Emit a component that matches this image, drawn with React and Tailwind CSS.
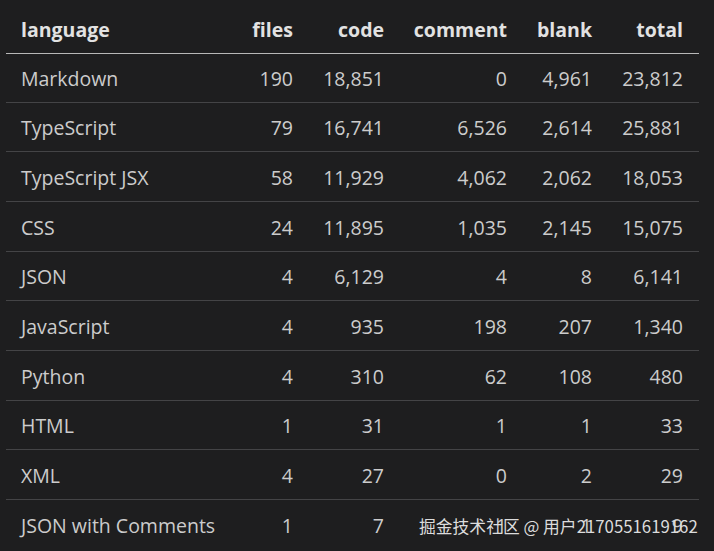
import React from "react";

const rows = [
  ["Markdown", "190", "18,851", "0", "4,961", "23,812"],
  ["TypeScript", "79", "16,741", "6,526", "2,614", "25,881"],
  ["TypeScript JSX", "58", "11,929", "4,062", "2,062", "18,053"],
  ["CSS", "24", "11,895", "1,035", "2,145", "15,075"],
  ["JSON", "4", "6,129", "4", "8", "6,141"],
  ["JavaScript", "4", "935", "198", "207", "1,340"],
  ["Python", "4", "310", "62", "108", "480"],
  ["HTML", "1", "31", "1", "1", "33"],
  ["XML", "4", "27", "0", "2", "29"],
  ["JSON with Comments", "1", "7", "1", "1", "9"],
];

const heads = ["language", "files", "code", "comment", "blank", "total"];
const grid = "grid grid-cols-[219px_53px_91px_123px_85px_91px] pl-[15px] pr-[16px] items-center";

export default function App() {
  return (
    <div
      className="relative w-[714px] h-[551px] overflow-hidden bg-[#1e1e1f] text-[#cccccc]"
      style={{ fontFamily: '"Open Sans", "Noto Sans", sans-serif' }}
    >
      <div className="ml-[6px] w-[693px]">
        <div className={`${grid} h-[54px] border-b border-[#b8b8b8] pt-[6px] text-[19.5px] font-bold text-[#e2e2e2]`}>
          {heads.map((h, i) => (
            <div key={h} className={i === 0 ? "text-left" : "text-right"}>
              {h}
            </div>
          ))}
        </div>
        {rows.map((r, ri) => (
          <div
            key={r[0]}
            className={`${grid} ${ri === 0 ? "h-[48.5px]" : "h-[49.7px]"} ${ri === rows.length - 1 ? "" : "border-b border-[#444446]"} pt-[2px] text-[19.5px]`}
          >
            {r.map((c, i) => (
              <div key={i} className={i === 0 ? "text-left" : "text-right"}>
                {c}
              </div>
            ))}
          </div>
        ))}
      </div>
      <div
        className="absolute left-[419px] top-[514px] text-[16.8px] leading-[24px] text-[#dcdcdc] whitespace-nowrap"
        style={{ fontFamily: '"Noto Sans CJK SC", "Noto Sans", sans-serif' }}
      >
        掘金技术社区 @ 用户2170551619162
      </div>
    </div>
  );
}
